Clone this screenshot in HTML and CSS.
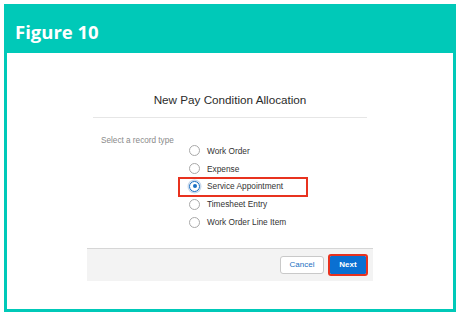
FILE: index.html
```html
<!DOCTYPE html>
<html lang="en">
<head>
  <meta charset="UTF-8" />
  <title>Figure 10</title>
  <link rel="stylesheet" href="styles.css">
</head>
<body>

<div class="figura">
  <div class="cabecalho">Figure 10</div>

  <div class="conteudo">
    <div class="dialogo">
      <div class="titulo">New Pay Condition Allocation</div>
      <div class="separador"></div>

      <div class="corpo">
        <div class="rotulo">Select a record type</div>
        <div class="opcoes">
          <div class="opcao"><span class="radio"></span>Work Order</div>
          <div class="opcao"><span class="radio"></span>Expense</div>
          <div class="opcao destaque"><span class="radio marcado"></span>Service Appointment</div>
          <div class="opcao"><span class="radio"></span>Timesheet Entry</div>
          <div class="opcao"><span class="radio"></span>Work Order Line Item</div>
        </div>
      </div>

      <div class="rodape">
        <button class="btn cancelar">Cancel</button>
        <button class="btn proximo">Next</button>
      </div>
    </div>
  </div>
</div>

</body>
</html>
```

FILE: styles.css
```css
body {
  margin: 0;
  background-color: #fff;
  font-family: 'Liberation Sans', Arial, sans-serif;
}

.figura {
  margin: 4px;
  width: 452px;
  height: 308px;
  box-sizing: border-box;
  border: 3px solid #00c9b8;
  border-top: none;
  display: flex;
  flex-direction: column;
}

.cabecalho {
  height: 49px;
  margin: 0 -3px;
  background-color: #00c9b8;
  color: #fff;
  font-family: 'Open Sans', sans-serif;
  font-weight: bold;
  font-size: 18.5px;
  display: flex;
  align-items: center;
  padding: 5px 0 0 11px;
  box-sizing: border-box;
}

.conteudo {
  flex: 1;
  padding-top: 40px;
}

.dialogo {
  width: 286px;
  margin: 0 auto;
}

.titulo {
  font-size: 11.7px;
  line-height: 14px;
  color: #2b2b2b;
  text-align: center;
}

.separador {
  height: 1px;
  margin: 10px 6px 0;
  background-color: #e6e6e6;
}

.corpo {
  display: flex;
  padding: 15px 0 17px 14px;
}

.rotulo {
  width: 88px;
  margin-top: 2px;
  font-size: 8.2px;
  line-height: 12px;
  color: #8a8a8a;
}

.opcoes {
  padding-top: 9px;
}

.opcao {
  position: relative;
  display: flex;
  align-items: center;
  height: 17.8px;
  font-size: 8.3px;
  color: #333;
}

.radio {
  width: 11px;
  height: 11px;
  box-sizing: border-box;
  border: 1px solid #a9a9a9;
  border-radius: 50%;
  margin-right: 7px;
  display: flex;
  align-items: center;
  justify-content: center;
}

.radio.marcado {
  border-color: #1b6fc2;
  box-shadow: 0 0 0 1.5px #c9d9ec;
}

.radio.marcado::after {
  content: '';
  width: 4px;
  height: 4px;
  border-radius: 50%;
  background-color: #1b6fc2;
}

.destaque::after {
  content: '';
  position: absolute;
  left: -11px;
  right: -22px;
  top: -1px;
  bottom: -2px;
  border: 2px solid #e8321f;
}

.rodape {
  height: 33px;
  box-sizing: border-box;
  border-top: 1px solid #d6d6d6;
  background-color: #f3f3f3;
  display: flex;
  align-items: center;
  justify-content: flex-end;
  gap: 6px;
  padding: 0 7px 0 0;
}

.btn {
  height: 18px;
  border-radius: 3px;
  font-family: 'Liberation Sans', Arial, sans-serif;
  font-size: 8px;
  padding: 0;
}

.cancelar {
  width: 44px;
  border: 1px solid #c9c9c9;
  background-color: #fff;
  color: #1b6fc2;
}

.proximo {
  width: 36px;
  border: none;
  background-color: #0a70d2;
  color: #fff;
  font-weight: bold;
  outline: 2px solid #e8321f;
  border-radius: 1px;
}
```
